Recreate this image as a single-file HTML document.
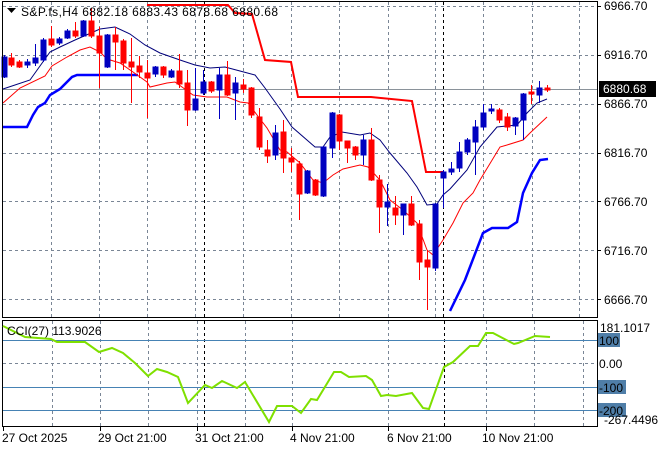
<!DOCTYPE html>
<html><head><meta charset="utf-8"><style>
html,body{margin:0;padding:0;background:#fff;width:660px;height:450px;overflow:hidden}
svg{display:block}
text{font-family:"Liberation Sans",sans-serif;font-size:12px;fill:#000}
</style></head><body>
<svg width="660" height="450" viewBox="0 0 660 450" xmlns="http://www.w3.org/2000/svg">
<rect width="660" height="450" fill="#fff"/>
<g stroke="#7a8696" stroke-width="1" stroke-dasharray="3,3" fill="none">
<path d="M51.5 2V317M99.5 2V317M147.5 2V317M195.5 2V317M243.5 2V317M291.5 2V317M339.5 2V317M388.5 2V317M435.5 2V317M483.5 2V317M532.5 2V317M579.5 2V317"/>
<path d="M3 6.5H597M3 55.5H597M3 104.5H597M3 153.5H597M3 201.5H597M3 250.5H597M3 299.5H597"/>
<path d="M52.5 321V426M100.5 321V426M148.5 321V426M197.5 321V426M245.5 321V426M292.5 321V426M388.5 321V426M486.5 321V426M534.5 321V426M583.5 321V426M3 363.5H597"/>
</g>
<g stroke="#000" stroke-width="1" stroke-dasharray="3,3"><path d="M204.5 2V317M443.5 2V317M204.5 321V426M444.5 321V426"/></g>
<path d="M3 89.5H597" stroke="#8a929a" stroke-width="1"/>
<polyline fill="none" stroke="#ff0000" stroke-width="2" points="147,5 228,5 235,13 252,14 265,60 291,62 298,97 371,97 412,101 426,172 444,172"/>
<polyline fill="none" stroke="#0000ff" stroke-width="2.5" points="3,127 27,127 33,115 38,107 45,103 50,95 60,89 72,77 77,75 138,75"/>
<polyline fill="none" stroke="#0000ff" stroke-width="2.5" points="450,311 465,280 483,233 492,228 508,228 517,222 523,193 532,173 540,160 548,159"/>
<polyline fill="none" stroke="#00007a" stroke-width="1" points="3,89 30,80 50,52 60,47 75,40 100,29 115,27 130,34 145,45 160,53 180,60 195,65 210,68 225,67 240,71 255,75 265,88 275,102 280,109 292,127 315,147 323,147 330,137 342,132 360,135 370,133 380,140 390,153 407,173 417,187 427,205 437,204 443,195 450,189 467,170 480,147 497,127 517,125 527,113 537,103 547,99"/>
<polyline fill="none" stroke="#ff0000" stroke-width="1" points="3,103 20,88 45,76 52,66 67,57 80,50 90,47 100,52 107,59 120,63 133,72 147,82 150,87 167,83 175,82 182,87 193,95 207,97 227,97 240,102 248,103 257,115 267,128 280,150 287,152 300,163 313,180 323,183 333,175 343,169 360,165 368,167 380,180 390,200 403,210 417,223 427,250 433,255 443,240 453,223 463,203 473,193 480,180 500,147 507,145 523,140 530,133 547,117"/>
<g stroke-width="1">
<g stroke="#0000c0" fill="#0000c0">
<path d="M4.5 55V78M27.5 59V68M35.5 44V66M43.5 38V62M59.5 37V45M67.5 29V39M83.5 20V37M107.5 34V68M155.5 66V77M171.5 69V78M195.5 68V111M203.5 70V95M219.5 68V119M235.5 77V120M275.5 125V160M307.5 170V194M323.5 146V197M332.5 112V158M363.5 135V165M387.5 184V226M403.5 204V235M435.5 203V271M443.5 170V208M451.5 162V175M459.5 142V172M467.5 138V155M475.5 120V175M483.5 104V130M491.5 104V114M515.5 117V135M523.5 93V140M539.5 81V103"/>
<rect x="2" y="57" width="5" height="20"/><rect x="25" y="62" width="5" height="3"/><rect x="33" y="58" width="5" height="5"/><rect x="41" y="40" width="5" height="20"/><rect x="57" y="39" width="5" height="4"/><rect x="65" y="31" width="5" height="7"/><rect x="81" y="21" width="5" height="15"/><rect x="105" y="35" width="5" height="32"/><rect x="153" y="67" width="5" height="7"/><rect x="169" y="71" width="5" height="6"/><rect x="193" y="99" width="5" height="11"/><rect x="201" y="82" width="5" height="11"/><rect x="217" y="75" width="5" height="15"/><rect x="233" y="83" width="5" height="10"/><rect x="273" y="133" width="5" height="22"/><rect x="305" y="171" width="5" height="22"/><rect x="321" y="147" width="5" height="49"/><rect x="330" y="113" width="5" height="35"/><rect x="361" y="140" width="5" height="15"/><rect x="385" y="202" width="5" height="5"/><rect x="401" y="204" width="5" height="11"/><rect x="433" y="204" width="5" height="64"/><rect x="441" y="172" width="5" height="6"/><rect x="449" y="169" width="5" height="3"/><rect x="457" y="152" width="5" height="16"/><rect x="465" y="140" width="5" height="12"/><rect x="473" y="127" width="5" height="15"/><rect x="481" y="113" width="5" height="14"/><rect x="489" y="109" width="5" height="2"/><rect x="513" y="118" width="5" height="8"/><rect x="521" y="94" width="5" height="26"/><rect x="537" y="88" width="5" height="7"/>
</g>
<g stroke="#ff0000" fill="#ff0000">
<path d="M11.5 53V67M19.5 60V68M51.5 26V47M75.5 22V38M91.5 8V38M99.5 27V88M115.5 27V70M123.5 39V70M131.5 38V103M139.5 56V78M147.5 60V118M163.5 66V78M179.5 54V88M187.5 70V126M211.5 81V93M227.5 61V96M243.5 79V93M251.5 87V118M259.5 108V150M267.5 140V163M283.5 120V173M291.5 148V172M299.5 161V220M315.5 179V196M339.5 114V150M347.5 141V163M355.5 146V160M371.5 128V181M379.5 175V233M395.5 196V225M411.5 196V226M419.5 220V280M427.5 250V310M499.5 108V123M507.5 113V131M531.5 85V104M547.5 85V92"/>
<rect x="9" y="58" width="5" height="7"/><rect x="17" y="62" width="5" height="5"/><rect x="49" y="39" width="5" height="6"/><rect x="73" y="31" width="5" height="5"/><rect x="89" y="21" width="5" height="15"/><rect x="97" y="36" width="5" height="17"/><rect x="113" y="35" width="5" height="7"/><rect x="121" y="41" width="5" height="22"/><rect x="129" y="62" width="5" height="5"/><rect x="137" y="66" width="5" height="6"/><rect x="145" y="73" width="5" height="5"/><rect x="161" y="67" width="5" height="8"/><rect x="177" y="71" width="5" height="13"/><rect x="185" y="83" width="5" height="27"/><rect x="209" y="82" width="5" height="9"/><rect x="225" y="75" width="5" height="20"/><rect x="241" y="85" width="5" height="4"/><rect x="249" y="88" width="5" height="27"/><rect x="257" y="117" width="5" height="30"/><rect x="265" y="150" width="5" height="6"/><rect x="281" y="132" width="5" height="26"/><rect x="289" y="158" width="5" height="4"/><rect x="297" y="164" width="5" height="30"/><rect x="313" y="180" width="5" height="15"/><rect x="337" y="115" width="5" height="26"/><rect x="345" y="141" width="5" height="7"/><rect x="353" y="147" width="5" height="8"/><rect x="369" y="140" width="5" height="40"/><rect x="377" y="180" width="5" height="27"/><rect x="393" y="208" width="5" height="7"/><rect x="409" y="204" width="5" height="21"/><rect x="417" y="224" width="5" height="38"/><rect x="425" y="260" width="5" height="7"/><rect x="497" y="110" width="5" height="10"/><rect x="505" y="117" width="5" height="10"/><rect x="529" y="92" width="5" height="2"/><rect x="545" y="88" width="5" height="2"/>
</g>
</g>
<rect x="2.5" y="1.5" width="595" height="316" fill="none" stroke="#000"/>
<rect x="2.5" y="320.5" width="595" height="106" fill="none" stroke="#000"/>
<path d="M7 8h9l-4.5 5z" fill="#000"/>
<text x="21" y="16" textLength="257" lengthAdjust="spacing">S&amp;P.fs,H4  6882.18 6883.43 6878.68 6880.68</text>
<g>
<path d="M597 6.5h4M597 55.5h4M597 104.5h4M597 153.5h4M597 201.5h4M597 250.5h4M597 299.5h4" stroke="#000"/>
<text x="604" y="10">6966.70</text>
<text x="604" y="59">6916.70</text>
<text x="604" y="108">6866.70</text>
<text x="604" y="157">6816.70</text>
<text x="604" y="206">6766.70</text>
<text x="604" y="255">6716.70</text>
<text x="604" y="304">6666.70</text>
<rect x="599" y="81" width="57" height="16" fill="#000"/>
<text x="603" y="93" style="fill:#fff">6880.68</text>
</g>
<g stroke="#4682b4" stroke-width="1"><path d="M3 340.5H597M3 387.5H597M3 410.5H597"/></g>
<polyline fill="none" stroke="#7fe000" stroke-width="2" points="3,326 25,337 51,339 57,342 85,342 99,352 112,348 123,353 135,363 148,376 157,369 167,372 178,377 188,403 205,385 212,388 222,381 237,388 245,382 269,422 277,406 292,406 301,413 311,399 317,400 334,372 341,372 349,377 366,376 372,380 381,396 387,395 396,396 412,393 423,408 429,409 444,367 453,362 470,346 478,346 486,333 493,333 514,344 518,343 535,336 550,337"/>
<text x="7" y="335">CCI(27) 113.9026</text>
<rect x="598" y="333" width="22" height="14" fill="#4f7ea8"/>
<rect x="598" y="380" width="28" height="14" fill="#4f7ea8"/>
<rect x="598" y="403" width="28" height="14" fill="#4f7ea8"/>
<text x="600" y="332">181.1017</text>
<text x="599" y="345">100</text>
<text x="599" y="368">0.00</text>
<text x="599" y="392">-100</text>
<text x="599" y="415">-200</text>
<text x="604" y="424">-267.4496</text>
<path d="M3.5 427v4M100.5 427v4M197.5 427v4M292.5 427v4M388.5 427v4M486.5 427v4" stroke="#000"/>
<text x="2" y="442">27 Oct 2025</text>
<text x="98" y="442">29 Oct 21:00</text>
<text x="195" y="442">31 Oct 21:00</text>
<text x="290" y="442">4 Nov 21:00</text>
<text x="387" y="442">6 Nov 21:00</text>
<text x="482" y="442">10 Nov 21:00</text>
</svg>
</body></html>
